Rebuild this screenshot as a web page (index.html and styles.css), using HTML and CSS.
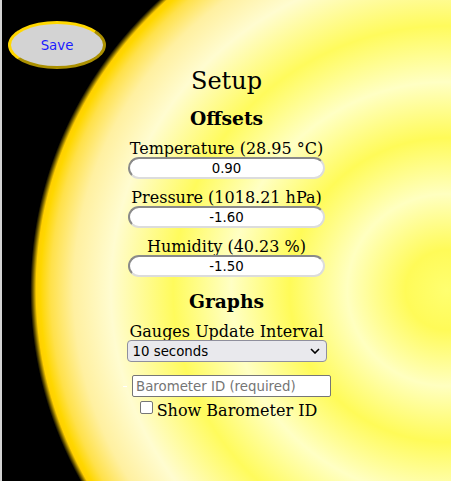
FILE: index.html
```html
<!DOCTYPE html>
<html>
<head>
<meta charset="utf-8">
<link rel="stylesheet" href="styles.css">
</head>
<body>
<div class="page">
  <button class="save">Save</button>
  <h2 class="title">Setup</h2>
  <h3 class="section">Offsets</h3>
  <div class="field">
    <label class="label">Temperature (28.95 °C)</label>
    <input class="offset" type="text" value="0.90">
  </div>
  <div class="field">
    <label class="label">Pressure (1018.21 hPa)</label>
    <input class="offset" type="text" value="-1.60">
  </div>
  <div class="field">
    <label class="label">Humidity (40.23 %)</label>
    <input class="offset" type="text" value="-1.50">
  </div>
  <h3 class="section graphs">Graphs</h3>
  <div class="field">
    <label class="label">Gauges Update Interval</label>
    <select class="interval">
      <option>10 seconds</option>
    </select>
  </div>
  <div class="baro-row"><span class="dash"></span><input class="baro" type="text" placeholder="Barometer ID (required)"></div>
  <div class="check-row"><input class="check" type="checkbox" id="show"><label for="show" class="check-label">Show Barometer ID</label></div>
</div>
</body>
</html>
```

FILE: styles.css
```css
html, body {
  margin: 0;
  padding: 0;
}
.page {
  box-sizing: border-box;
  min-height: 481px;
  border-left: 2px solid #d3d3d3;
  padding-top: 21px;
  text-align: center;
  font-family: "DejaVu Serif", serif;
  color: #000;
  background-color: #000;
  background-image: radial-gradient(415px 400px at 445px 290px,
    #ffff70 0%,
    #fffb58 10%,
    #ffffc0 24%,
    #fffb58 38%,
    #ffffc4 52%,
    #fffb5c 66%,
    #fffcd0 81%,
    #fff0a0 90%,
    #ffe14a 95.5%,
    #ffd700 98%,
    #ffd000 99%,
    #7a6400 99.7%,
    #000 100.4%);
}
.save {
  display: block;
  margin: 0 0 0 6px;
  width: 98px;
  height: 48px;
  box-sizing: border-box;
  border-radius: 50%;
  background: #d3d3d3;
  border: 3px outset #ffd700;
  color: #1a1aff;
  font-family: "DejaVu Sans", sans-serif;
  font-size: 13.33px;
  padding: 0;
}
.title {
  font-size: 24px;
  font-weight: normal;
  line-height: 28px;
  margin: -2px 0 0;
}
.section {
  font-size: 18.72px;
  font-weight: bold;
  line-height: 22px;
  margin: 12px 0 0;
}
.graphs {
  margin-top: 13px;
}
.field {
  display: flex;
  flex-direction: column;
  align-items: center;
  margin-top: 11px;
}
.field + .field {
  margin-top: 10px;
}
.label {
  font-size: 16px;
  line-height: 17px;
}
.offset {
  box-sizing: border-box;
  width: 197px;
  height: 22px;
  border-radius: 11px;
  border-style: solid;
  border-width: 2px;
  border-color: #8a8a8a #dcdcdc #dcdcdc #8a8a8a;
  background: #fff;
  text-align: center;
  font-family: "DejaVu Sans", sans-serif;
  font-size: 13.33px;
  color: #000;
  padding: 0 4px;
  margin: 0;
}
.interval {
  -webkit-appearance: none;
  appearance: none;
  box-sizing: border-box;
  width: 200px;
  height: 22px;
  margin: 0;
  padding: 0 20px 0 5px;
  border: 1px solid #8f8f9d;
  border-radius: 4px;
  background-color: #e9e9ed;
  background-image: url("data:image/svg+xml;utf8,<svg xmlns='http://www.w3.org/2000/svg' width='10' height='6' viewBox='0 0 10 6'><path d='M1 1 L5 5 L9 1' fill='none' stroke='black' stroke-width='1.6'/></svg>");
  background-repeat: no-repeat;
  background-position: right 6px center;
  color: #000;
  font-family: "DejaVu Sans", sans-serif;
  font-size: 13.33px;
  text-align: left;
}
.baro-row {
  margin-top: 13px;
  line-height: 22px;
  height: 22px;
}
.dash {
  display: inline-block;
  width: 10px;
  height: 1px;
  vertical-align: middle;
  background: linear-gradient(to right, transparent 1px, #fff 1px, #fff 5px, transparent 5px);
}
.baro {
  box-sizing: border-box;
  width: 199px;
  height: 22px;
  margin: 0;
  vertical-align: top;
  font-family: "DejaVu Sans", sans-serif;
  font-size: 13.33px;
  border: 1px solid #767676;
  border-radius: 2px;
  padding: 1px 3px;
  background: #fff;
}
.baro::placeholder {
  color: #757575;
}
.check-row {
  font-size: 16px;
  line-height: 18px;
  margin-top: 1px;
}
.check {
  -webkit-appearance: none;
  appearance: none;
  box-sizing: border-box;
  width: 13px;
  height: 13px;
  margin: 3px 4px 3px 4px;
  vertical-align: -1px;
  border: 1px solid #767676;
  border-radius: 2px;
  background: #fff;
}
```
